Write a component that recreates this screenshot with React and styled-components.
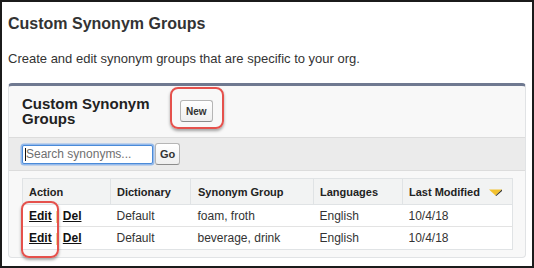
import React from "react";
import styled, { createGlobalStyle } from "styled-components";

const Global = createGlobalStyle`
  html, body { margin: 0; padding: 0; background: #fff; }
  body { font-family: "Liberation Sans", Arial, sans-serif; }
  * { box-sizing: border-box; }
`;

const Frame = styled.div`
  width: 534px;
  height: 268px;
  border: 2px solid #1b1b1b;
  padding: 0 6px;
  background: #fff;
  overflow: hidden;
`;

const Title = styled.h1`
  margin: 12px 0 0;
  font-size: 16px;
  line-height: 19px;
  font-weight: bold;
  color: #333;
`;

const Desc = styled.p`
  margin: 18px 0 0;
  font-size: 13px;
  line-height: 16px;
  color: #333;
`;

const Panel = styled.section`
  margin-top: 16px;
  background: #f8f8f8;
  border: 1px solid #e1e3e5;
  border-top: 3px solid #6f7990;
  border-radius: 4px;
`;

const PanelHeader = styled.div`
  display: flex;
  align-items: center;
  padding: 10px 13px 11px;
`;

const PanelTitle = styled.h2`
  margin: 0;
  width: 150px;
  margin-right: 8px;
  font-size: 15px;
  line-height: 15px;
  font-weight: bold;
  color: #222;
`;

const Highlight = styled.div`
  position: relative;
  display: inline-flex;
  &::after {
    content: "";
    position: absolute;
    top: ${(p) => p.$t}px;
    left: ${(p) => p.$l}px;
    right: ${(p) => p.$r}px;
    bottom: ${(p) => p.$b}px;
    border: 2px solid #e5514c;
    border-radius: 8px;
    box-shadow: 0 2px 3px rgba(0, 0, 0, 0.35);
    pointer-events: none;
  }
`;

const Btn = styled.button`
  height: 22px;
  padding: 0 ${(p) => p.$px}px;
  font-family: "Liberation Sans", Arial, sans-serif;
  font-size: ${(p) => p.$fs}px;
  font-weight: bold;
  color: #333;
  background: linear-gradient(#ffffff, #efefef);
  border: 1px solid #b5b5b5;
  border-bottom-color: #8c8c8c;
  border-radius: 3px;
`;

const SearchBar = styled.div`
  display: flex;
  align-items: center;
  gap: 2px;
  padding: 5px 13px;
  background: #ebebeb;
  border-top: 1px solid #dcdcdc;
  border-bottom: 1px solid #dcdcdc;
`;

const InputWrap = styled.div`
  position: relative;
  display: flex;
`;

const Input = styled.input`
  width: 131px;
  height: 19px;
  padding: 0 3px;
  font-family: "Liberation Sans", Arial, sans-serif;
  font-size: 12px;
  color: #333;
  background: #fff;
  border: 1px solid #4a8ad8;
  border-radius: 2px;
  box-shadow: 0 0 0 1.5px rgba(120, 170, 235, 0.75);
  outline: none;
  &::placeholder { color: #6f6f6f; }
`;

const Caret = styled.span`
  position: absolute;
  left: 3px;
  top: 3px;
  width: 1px;
  height: 13px;
  background: #111;
`;

const TableWrap = styled.div`
  position: relative;
  margin: 7px 13px 7px;
`;

const EditHighlight = styled.div`
  position: absolute;
  left: -1px;
  top: 23px;
  width: 38px;
  height: 57px;
  border: 2px solid #e5514c;
  border-radius: 8px;
  box-shadow: 0 2px 3px rgba(0, 0, 0, 0.35);
  pointer-events: none;
`;

const Table = styled.table`
  width: 490px;
  border-collapse: collapse;
  table-layout: fixed;
  background: #fff;
  border: 1px solid #e0e3e5;
`;

const Th = styled.th`
  height: 26px;
  padding: 0 0 0 ${(p) => p.$pl || 6}px;
  text-align: left;
  font-size: 11px;
  font-weight: bold;
  color: #222;
  background: #f2f3f3;
  border-right: 1px solid #e0e3e5;
  border-bottom: 1px solid #e0e3e5;
  white-space: nowrap;
`;

const Td = styled.td`
  height: ${(p) => p.$h || 22}px;
  padding: 0 0 0 ${(p) => p.$pl || 6}px;
  font-size: 12px;
  color: #333;
  border-top: 1px solid #e3e3e3;
  white-space: nowrap;
`;

const ActionLink = styled.a`
  font-weight: bold;
  color: #111;
  text-decoration: underline;
`;

const Sep = styled.span`
  color: #333;
  margin: 0 4px;
`;

const SortArrow = styled.svg`
  margin-left: 9px;
  vertical-align: middle;
`;

const rows = [
  { dict: "Default", group: "foam, froth", lang: "English", mod: "10/4/18" },
  { dict: "Default", group: "beverage, drink", lang: "English", mod: "10/4/18" },
];

export default function App() {
  return (
    <>
      <Global />
      <Frame>
        <Title>Custom Synonym Groups</Title>
        <Desc>Create and edit synonym groups that are specific to your org.</Desc>
        <Panel>
          <PanelHeader>
            <PanelTitle>Custom Synonym Groups</PanelTitle>
            <Highlight $t={-13} $l={-10} $r={-11} $b={-7}>
              <Btn $px={5} $fs={10}>New</Btn>
            </Highlight>
          </PanelHeader>
          <SearchBar>
            <InputWrap>
              <Input placeholder="Search synonyms..." />
              <Caret />
            </InputWrap>
            <Btn $px={4} $fs={11}>Go</Btn>
          </SearchBar>
          <TableWrap>
            <Table>
              <colgroup>
                <col style={{ width: 88 }} />
                <col style={{ width: 80 }} />
                <col style={{ width: 123 }} />
                <col style={{ width: 89 }} />
                <col style={{ width: 110 }} />
              </colgroup>
              <thead>
                <tr>
                  <Th>Action</Th>
                  <Th>Dictionary</Th>
                  <Th $pl={7}>Synonym Group</Th>
                  <Th>Languages</Th>
                  <Th>
                    Last Modified
                    <SortArrow width="13" height="7" viewBox="0 0 13 7">
                      <polygon points="0,0.5 13,0.5 6.5,6.5" fill="#f2c12e" />
                      <polygon points="6.5,6.5 13,0.5 13,2 7.2,7" fill="#2e2e2e" />
                    </SortArrow>
                  </Th>
                </tr>
              </thead>
              <tbody>
                {rows.map((r, i) => (
                  <tr key={i}>
                    <Td $h={i === 1 ? 23 : 22}>
                      <ActionLink href="#">Edit</ActionLink>
                      <Sep>|</Sep>
                      <ActionLink href="#">Del</ActionLink>
                    </Td>
                    <Td>{r.dict}</Td>
                    <Td $pl={7}>{r.group}</Td>
                    <Td>{r.lang}</Td>
                    <Td>{r.mod}</Td>
                  </tr>
                ))}
              </tbody>
            </Table>
            <EditHighlight />
          </TableWrap>
        </Panel>
      </Frame>
    </>
  );
}
